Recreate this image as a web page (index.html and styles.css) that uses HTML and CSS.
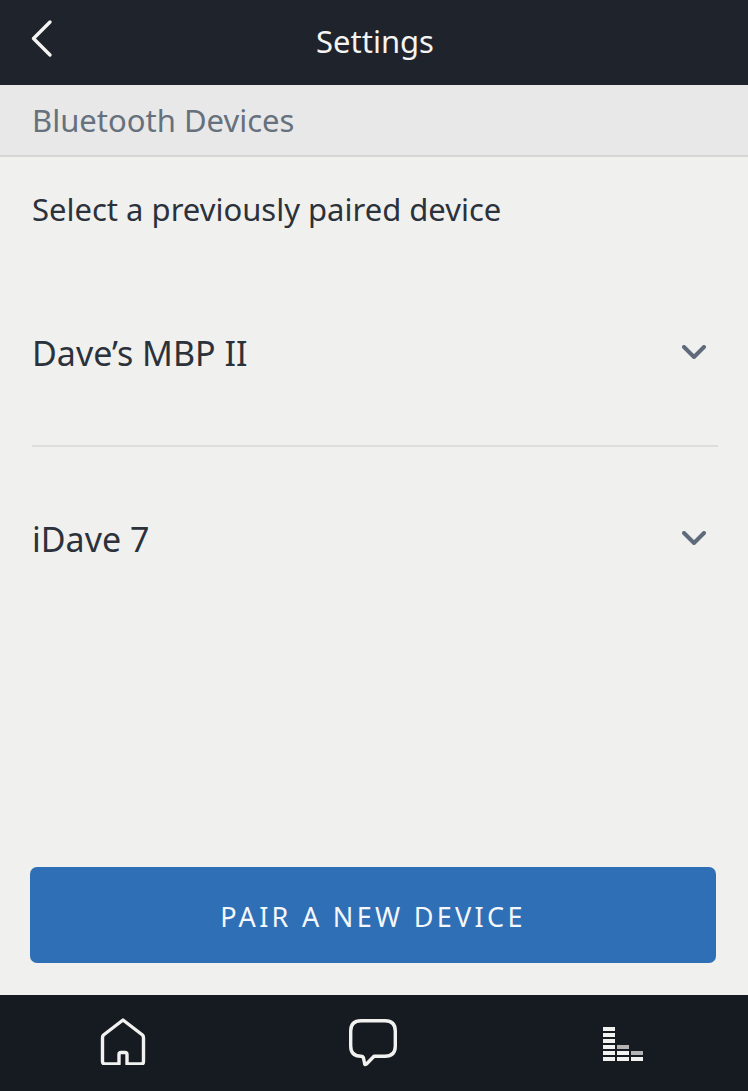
FILE: index.html
```html
<!DOCTYPE html>
<html lang="en">
<head>
<meta charset="utf-8">
<title>Settings</title>
<link rel="stylesheet" href="styles.css">
</head>
<body>
<div class="app">
  <header class="topbar">
    <svg class="back" width="24" height="40" viewBox="0 0 24 40"><path d="M20 3 L3.500 19.500 L20 36" fill="none" stroke="#f4f4f2" stroke-width="3.4" stroke-linecap="round" stroke-linejoin="round"/></svg>
    <h1 class="title">Settings</h1>
  </header>
  <div class="section">Bluetooth Devices</div>
  <main class="content">
    <p class="intro">Select a previously paired device</p>
    <div class="device device-first">
      <span class="device-name">Dave’s MBP II</span>
      <svg class="chev" width="24" height="14" viewBox="0 0 24 14"><path d="M2 2 L12 12 L22 2" fill="none" stroke="#5f6b7a" stroke-width="4" stroke-linecap="round" stroke-linejoin="round"/></svg>
    </div>
    <div class="device device-second">
      <span class="device-name">iDave 7</span>
      <svg class="chev" width="24" height="14" viewBox="0 0 24 14"><path d="M2 2 L12 12 L22 2" fill="none" stroke="#5f6b7a" stroke-width="4" stroke-linecap="round" stroke-linejoin="round"/></svg>
    </div>
    <div class="actions"><button class="pair">PAIR A NEW DEVICE</button></div>
  </main>
  <nav class="tabbar">
    <svg width="46" height="48" viewBox="0 0 46 48"><path d="M23 3 L42.500 18 Q43.500 19 43.500 21 V44.500 Q43.500 47 41 47 H27 V37.500 Q27 35.500 25 35.500 H21 Q19 35.500 19 37.500 V47 H5 Q2.500 47 2.500 44.500 V21 Q2.500 19 3.500 18 Z" fill="none" stroke="#f1f1ef" stroke-width="3.4" stroke-linejoin="round"/></svg>
    <svg width="50" height="50" viewBox="0 0 50 50"><path d="M13 2.700 H37 Q47.300 2.700 47.300 13 V28 Q47.300 38.300 37 38.300 H26 L18.500 46 Q16.500 47.500 16.500 45 L15.500 40 Q15 38.300 13 38.300 Q2.700 38.300 2.700 28 V13 Q2.700 2.700 13 2.700 Z" fill="none" stroke="#f1f1ef" stroke-width="3.4" stroke-linejoin="round"/></svg>
    <div class="eq">
      <div class="eq-col"><i></i><i></i><i></i><i></i><i></i><i></i></div>
      <div class="eq-col"><i class="dim"></i><i></i><i></i></div>
      <div class="eq-col"><i class="dim"></i><i></i></div>
    </div>
  </nav>
</div>
</body>
</html>
```
FILE: styles.css
```css
* { box-sizing: border-box; }
html, body { margin: 0; padding: 0; }
body { font-family: "Noto Sans", "Open Sans", sans-serif; background: #f0f0ee; }
.app { width: 748px; height: 1091px; display: flex; flex-direction: column; overflow: hidden; }
.topbar { height: 85px; flex: none; background: #1f232b; display: flex; align-items: center; justify-content: center; position: relative; padding-left: 2px; }
.back { position: absolute; left: 30px; top: 19px; }
.title { margin: 0; font-size: 31px; font-weight: 400; color: #f4f4f2; line-height: 83px; height: 85px; }
.section { height: 72px; flex: none; background: #e8e8e8; border-bottom: 2px solid #d5d6d6; padding: 0 32px; font-size: 31px; line-height: 71px; color: #66717d; }
.content { flex: 1; display: flex; flex-direction: column; padding: 0 30px; }
.intro { margin: 0; padding: 0 2px; height: 106px; font-size: 31px; line-height: 104px; color: #2c323b; }
.device { display: flex; justify-content: space-between; align-items: center; margin-left: 2px; padding-right: 12px; font-size: 34px; color: #2c323b; }
.device-name { margin-bottom: 2px; }
.device-first { height: 184px; border-bottom: 2px solid #dededd; }
.device-second { height: 186px; }
.chev { flex: none; margin-bottom: 4px; }
.actions { flex: 1; display: flex; align-items: flex-end; padding-bottom: 32px; }
.pair { width: 686px; height: 96px; border: 0; border-radius: 7px; background: #2f6fb6; color: #f4f7fb; font-family: inherit; font-size: 27px; letter-spacing: 3.3px; padding: 2px 0 0; }
.tabbar { height: 96px; flex: none; background: #161a21; display: flex; align-items: flex-start; }
.tabbar svg:nth-child(1) { margin: 22px 0 0 100px; }
.tabbar svg:nth-child(2) { margin: 23px 0 0 202px; }
.eq { display: flex; align-items: flex-end; gap: 2px; margin: 32px 0 0 205px; height: 34px; }
.eq-col { width: 12px; display: flex; flex-direction: column; gap: 2px; }
.eq-col i { display: block; height: 4px; background: #f1f1ef; }
.eq-col i.dim { background: #b3b3b3; }
```
